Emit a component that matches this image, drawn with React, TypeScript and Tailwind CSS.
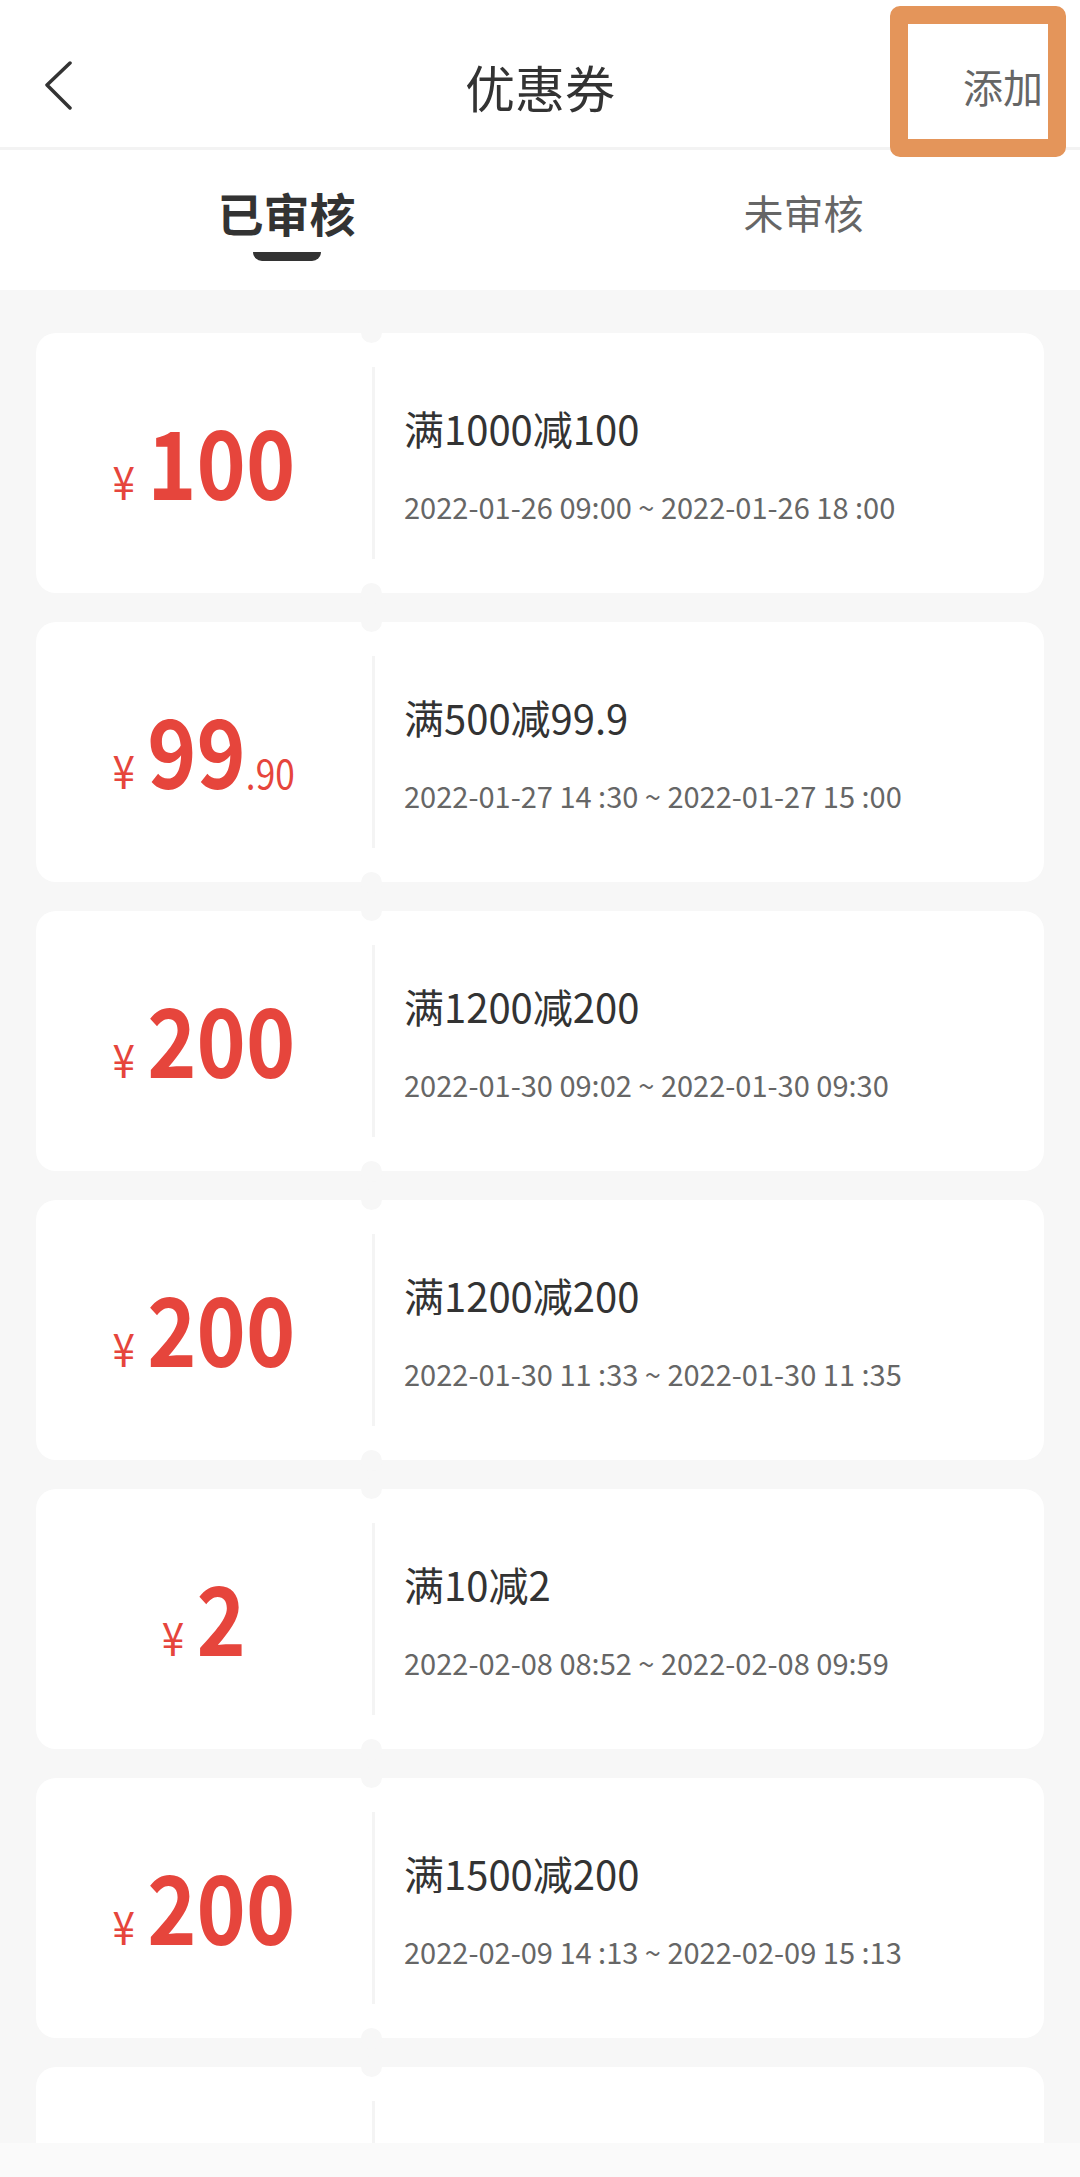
import React from "react";

type Coupon = {
  int: string;
  dec?: string;
  title: string;
  time: string;
};

const COUPONS: Coupon[] = [
  { int: "100", title: "满1000减100", time: "2022-01-26 09:00 ~ 2022-01-26 18 :00" },
  { int: "99", dec: ".90", title: "满500减99.9", time: "2022-01-27 14 :30 ~ 2022-01-27 15 :00" },
  { int: "200", title: "满1200减200", time: "2022-01-30 09:02 ~ 2022-01-30 09:30" },
  { int: "200", title: "满1200减200", time: "2022-01-30 11 :33 ~ 2022-01-30 11 :35" },
  { int: "2", title: "满10减2", time: "2022-02-08 08:52 ~ 2022-02-08 09:59" },
  { int: "200", title: "满1500减200", time: "2022-02-09 14 :13 ~ 2022-02-09 15 :13" },
  { int: "300", title: "满2000减300", time: "2022-02-10 10:00 ~ 2022-02-10 12:00" },
];

const CouponCard = ({ coupon }: { coupon: Coupon }) => {
  return (
    <div className="relative flex h-[260px] shrink-0 rounded-[20px] bg-white">
      {/* ticket notches */}
      <span className="absolute left-[325px] top-[-11px] h-[21px] w-[21px] rounded-full bg-[#f7f7f7]" />
      <span className="absolute bottom-[-11px] left-[325px] h-[21px] w-[21px] rounded-full bg-[#f7f7f7]" />

      <div className="flex w-[336px] items-center justify-center pb-[10px]">
        <div className="flex scale-x-[0.88] items-baseline text-[#e6453c]">
          <span className="mr-[14px] text-[46px] leading-none">¥</span>
          <span className="text-[95px] font-bold leading-none">{coupon.int}</span>
          {coupon.dec && <span className="text-[40px] leading-none">{coupon.dec}</span>}
        </div>
      </div>

      <div className="my-[34px] w-[3px] bg-[#f4f4f4]" />

      <div className="flex flex-1 flex-col justify-center pl-[29px] pt-[4px]">
        <p className="text-[40px] leading-[44px] text-[#333]">{coupon.title}</p>
        <p className="mt-[38px] text-[29px] leading-[36px] text-[#666]">{coupon.time}</p>
      </div>
    </div>
  );
};

const App = () => {
  return (
    <div className="relative flex h-[2177px] w-[1080px] flex-col overflow-hidden bg-[#f7f7f7] font-['Noto_Sans_CJK_SC','Noto_Sans',sans-serif]">
      {/* header */}
      <div className="flex h-[150px] shrink-0 items-center border-b-[3px] border-[#f3f3f3] bg-white pt-[24px]">
        <div className="flex w-[200px] pl-[44px]">
          <svg width="30" height="50" viewBox="0 0 30 50" fill="none">
            <polyline
              points="26,2 3,24 26,47"
              stroke="#333"
              strokeWidth="3.5"
              strokeLinecap="round"
              strokeLinejoin="round"
            />
          </svg>
        </div>
        <h1 className="flex-1 text-center text-[50px] leading-none text-[#333]">优惠券</h1>
        <div className="flex w-[200px] justify-end pr-[37px]">
          <span className="text-[40px] leading-none text-[#666]">添加</span>
        </div>
      </div>

      {/* highlight box */}
      <div className="absolute left-[890px] top-[6px] h-[151px] w-[176px] rounded-[10px] border-[18px] border-[#e4955a]" />

      {/* tabs */}
      <div className="flex h-[140px] shrink-0 bg-white pl-[28px] pr-[18px]">
        <div className="flex flex-1 flex-col items-center pt-[38px]">
          <span className="text-[46px] font-bold leading-[48px] text-[#333]">已审核</span>
          <span className="mt-[16px] h-[9px] w-[68px] rounded-b-full bg-[#333]" />
        </div>
        <div className="flex flex-1 flex-col items-center pt-[38px]">
          <span className="text-[40px] leading-[48px] text-[#666]">未审核</span>
        </div>
      </div>

      {/* list */}
      <div className="flex flex-1 flex-col gap-[29px] overflow-hidden px-[36px] pt-[43px]">
        {COUPONS.map((coupon, index) => (
          <CouponCard key={index} coupon={coupon} />
        ))}
      </div>

      <div className="h-[34px] shrink-0 bg-[#fafafa]" />
    </div>
  );
};

export default App;
